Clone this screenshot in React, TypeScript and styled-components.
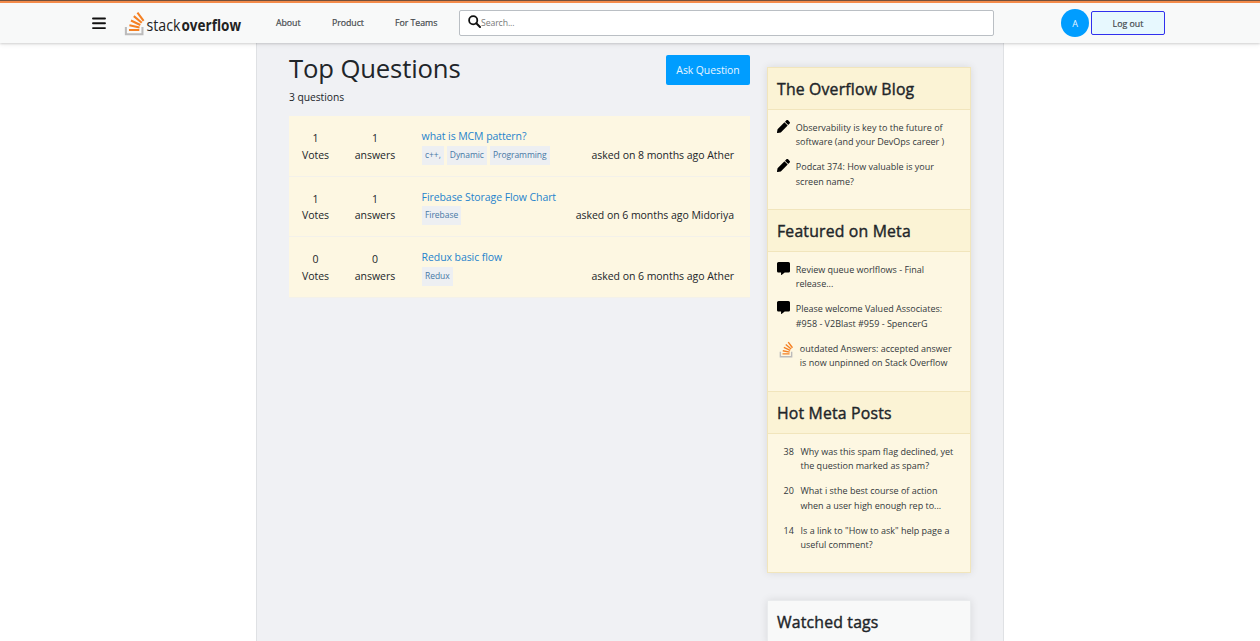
import React from 'react';
import styled, { createGlobalStyle } from 'styled-components';

const GlobalStyle = createGlobalStyle`
  * { box-sizing: border-box; }
  html, body { margin: 0; padding: 0; height: 641px; overflow: hidden; background: #fff; }
  body { font-family: "Open Sans", "Noto Sans", sans-serif; color: #212529; }
  h1, h2, p { margin: 0; font-weight: 400; }
`;

const Page = styled.div`
  height: 641px;
  display: flex;
  flex-direction: column;
  overflow: hidden;
`;

const Header = styled.header`
  position: relative;
  z-index: 1;
  flex: none;
  height: 43px;
  background: #f8f9f9;
  border-top: 3px solid #f48b4a;
  box-shadow: 0 1px 2px rgba(0, 0, 0, 0.14), 0 2px 5px rgba(0, 0, 0, 0.06);
  display: flex;
  align-items: flex-start;
  &::before {
    content: '';
    position: absolute;
    left: 0;
    right: 0;
    top: -3px;
    height: 1px;
    background: #74503c;
  }
`;

const MenuIcon = styled.svg`
  margin: 14px 0 0 92px;
  width: 14px;
  height: 13px;
`;

const Logo = styled.svg`
  margin: 7px 0 0 18px;
  width: 120px;
  height: 28px;
  overflow: visible;
`;

const Nav = styled.nav`
  margin-left: 32px;
  display: flex;
`;

const NavLink = styled.a<{ $width: number }>`
  width: ${(p) => p.$width}px;
  line-height: 41px;
  font-size: 8.8px;
  letter-spacing: -0.05px;
  -webkit-text-stroke: 0.2px currentColor;
  color: #45494d;
  white-space: nowrap;
`;

const SearchBox = styled.div`
  width: 535px;
  height: 26px;
  margin-top: 7px;
  padding-left: 8px;
  border: 1px solid #babfc4;
  border-radius: 2px;
  background: #fff;
  display: flex;
  align-items: center;
  font-size: 8.7px;
  letter-spacing: -0.1px;
  color: #777;
`;

const SearchGlyph = styled.svg`
  width: 13px;
  height: 13px;
  margin-top: -3px;
`;

const Avatar = styled.div`
  margin: 6px 0 0 67px;
  width: 28px;
  height: 28px;
  border-radius: 50%;
  background: #009dff;
  color: #e8f5ff;
  font-size: 9px;
  line-height: 29px;
  text-align: center;
`;

const LogoutButton = styled.button`
  margin: 8px 0 0 2px;
  padding: 1px 0 0;
  width: 74px;
  height: 24px;
  border: 1px solid #3030ee;
  border-radius: 2px;
  background: #e7f8fe;
  color: #45494d;
  font: 400 8.8px "Open Sans", sans-serif;
  -webkit-text-stroke: 0.2px currentColor;
`;

const Content = styled.main`
  align-self: flex-start;
  margin-left: 256px;
  width: 748px;
  flex: 1;
  min-height: 0;
  background: #f0f1f4;
  box-shadow: inset 1px 0 #dfe1e4, inset -1px 0 #dfe1e4;
  display: flex;
  overflow: hidden;
`;

const Questions = styled.section`
  margin: 12px 0 0 33px;
  width: 461px;
`;

const TopBar = styled.div`
  display: flex;
  justify-content: space-between;
  height: 30px;
`;

const Title = styled.h1`
  font-size: 25.7px;
  line-height: 27px;
  letter-spacing: -0.15px;
  white-space: nowrap;
`;

const AskButton = styled.button`
  width: 84px;
  height: 30px;
  padding: 0;
  border: 0;
  border-radius: 2px;
  background: #009dff;
  color: #e8f5ff;
  font: 400 10.4px "Open Sans", sans-serif;
  letter-spacing: -0.05px;
`;

const Count = styled.p`
  margin-top: 4px;
  height: 27px;
  line-height: 17px;
  font-size: 10.3px;
  letter-spacing: -0.05px;
`;

const Row = styled.article`
  height: 60.5px;
  display: flex;
  background: #fdf7e2;
  border-bottom: 1px solid #f3f1ea;
  font-size: 10.5px;
  letter-spacing: -0.04px;
  line-height: 16.5px;
`;

const Stat = styled.div<{ $width: number }>`
  width: ${(p) => p.$width}px;
  padding-top: 14px;
  text-align: center;
`;

const Detail = styled.div`
  flex: 1;
  margin-left: 13.6px;
  padding: 11px 16px 0 0;
`;

const QuestionLink = styled.a`
  display: block;
  height: 18px;
  line-height: 18px;
  font-size: 10.5px;
  letter-spacing: -0.08px;
  color: #1f83cc;
`;

const Meta = styled.div`
  display: flex;
  justify-content: space-between;
  align-items: center;
  height: 20px;
  white-space: nowrap;
`;

const Tags = styled.div`
  display: flex;
  gap: 3px;
  margin-left: 0.4px;
`;

const Tag = styled.span`
  height: 19px;
  padding: 0 3px;
  background: #edeff2;
  color: #4778a5;
  font-size: 8.5px;
  line-height: 18px;
  letter-spacing: -0.05px;
`;

const Aside = styled.aside`
  margin: 24px 0 0 16.5px;
  width: 204px;
  display: flex;
  flex-direction: column;
  gap: 27px;
`;

const Card = styled.div<{ $plain?: boolean }>`
  flex: none;
  border: 1px solid ${(p) => (p.$plain ? '#e9ebed' : '#f1e5bc')};
  background: ${(p) => (p.$plain ? '#f8f9f9' : '#fdf7e2')};
  box-shadow: 0 0 8px rgba(0, 0, 0, 0.1);
`;

const CardTitle = styled.h2<{ $plain?: boolean; $first?: boolean }>`
  height: ${(p) => (p.$first ? 42 : 43)}px;
  padding-left: 9.5px;
  background: ${(p) => (p.$plain ? '#f8f9f9' : '#fbf3d5')};
  border: solid #f1e5bc;
  border-width: ${(p) => (p.$plain ? '0' : p.$first ? '0 0 1px' : '1px 0')};
  font-size: 15.8px;
  letter-spacing: 0.18px;
  -webkit-text-stroke: 0.4px currentColor;
  line-height: 42px;
  white-space: nowrap;
`;

const CardBody = styled.div<{ $height: number }>`
  height: ${(p) => p.$height}px;
  padding: 11px 0 0 9.5px;
  display: flex;
  flex-direction: column;
  gap: 10.7px;
`;

const Item = styled.div`
  display: flex;
  height: 28.7px;
  font-size: 9px;
  line-height: 14.35px;
  white-space: nowrap;
  color: #33373b;
`;

const Marker = styled.span<{ $width: number; $indent?: number }>`
  flex: none;
  width: ${(p) => p.$width}px;
  padding-left: ${(p) => p.$indent ?? 0}px;
`;

const Glyph = styled.svg<{ $size: number; $shift: number }>`
  display: block;
  width: ${(p) => p.$size}px;
  height: ${(p) => p.$size}px;
  margin-top: ${(p) => p.$shift}px;
`;

const Line = styled.span`
  display: block;
`;

const StackMark = () => (
  <>
    <path fill="#bcbbbb" d="M84.4 93.8V70.6h7.7v30.9H22.6V70.6h7.7v23.2z" />
    <path
      fill="#f48024"
      d="M38.8 68.4l37.8 7.9 1.6-7.6-37.8-7.9-1.6 7.6zm5-18l35 16.3 3.2-7-35-16.4-3.2 7.1zm9.7-17.2l29.7 24.7 4.9-5.9-29.7-24.7-4.9 5.9zm19.2-18.3l-6.2 4.6 23 31 6.2-4.6-23-31zM38 86h38.6v-7.7H38V86z"
    />
  </>
);

const Pen = () => (
  <Glyph $size={13} $shift={-1.5} viewBox="0 0 512 512">
    <path d="M498 142l-46.600 46.600c-4.700 4.700-12.300 4.700-17 0L323.500 77.700c-4.700-4.700-4.700-12.300 0-17L370.100 14c18.700-18.700 49.100-18.700 67.900 0l60.100 60.100c18.800 18.700 18.800 49.100-.1 67.900zM284.200 99.800L21.600 362.400.4 483.900c-2.900 16.400 11.400 30.600 27.800 27.800l121.500-21.300 262.600-262.600c4.700-4.700 4.700-12.300 0-17L301.400 99.800c-4.800-4.700-12.400-4.700-17.200 0z" />
  </Glyph>
);

const Comment = () => (
  <Glyph $size={13} $shift={-1.5} viewBox="0 0 512 512">
    <path d="M448 0H64C28.700 0 0 28.700 0 64v288c0 35.300 28.700 64 64 64h96v84c0 9.800 11.200 15.500 19.100 9.700L304 416h144c35.300 0 64-28.700 64-64V64c0-35.300-28.700-64-64-64z" />
  </Glyph>
);

const StackGlyph = () => (
  <Glyph $size={19} $shift={-1.5} viewBox="18 6 84 104">
    <StackMark />
  </Glyph>
);

interface Question {
  votes: number;
  answers: number;
  title: string;
  tags: string[];
  asked: string;
}

const questions: Question[] = [
  { votes: 1, answers: 1, title: 'what is MCM pattern?', tags: ['c++,', 'Dynamic', 'Programming'], asked: 'asked on 8 months ago Ather' },
  { votes: 1, answers: 1, title: 'Firebase Storage Flow Chart', tags: ['Firebase'], asked: 'asked on 6 months ago Midoriya' },
  { votes: 0, answers: 0, title: 'Redux basic flow', tags: ['Redux'], asked: 'asked on 6 months ago Ather' },
];

interface Entry {
  mark: React.ReactNode;
  width: number;
  indent?: number;
  lines: [string, string];
}

const sections: { title: string; height: number; entries: Entry[] }[] = [
  {
    title: 'The Overflow Blog',
    height: 99,
    entries: [
      { mark: <Pen />, width: 18.8, lines: ['Observability is key to the future of', 'software (and your DevOps career )'] },
      { mark: <Pen />, width: 18.8, lines: ['Podcat 374: How valuable is your', 'screen name?'] },
    ],
  },
  {
    title: 'Featured on Meta',
    height: 139,
    entries: [
      { mark: <Comment />, width: 18.8, lines: ['Review queue worlflows - Final', 'release...'] },
      { mark: <Comment />, width: 18.8, lines: ['Please welcome Valued Associates:', '#958 - V2Blast #959 - SpencerG'] },
      { mark: <StackGlyph />, width: 22.8, lines: ['outdated Answers: accepted answer', 'is now unpinned on Stack Overflow'] },
    ],
  },
  {
    title: 'Hot Meta Posts',
    height: 138,
    entries: [
      { mark: '38', width: 23.5, indent: 6.5, lines: ['Why was this spam flag declined, yet', 'the question marked as spam?'] },
      { mark: '20', width: 23.5, indent: 6.5, lines: ['What i sthe best course of action', 'when a user high enough rep to...'] },
      { mark: '14', width: 23.5, indent: 6.5, lines: ['Is a link to "How to ask" help page a', 'useful comment?'] },
    ],
  },
];

export default function App() {
  return (
    <>
      <GlobalStyle />
      <Page>
        <Header>
          <MenuIcon viewBox="0 0 14 13">
            <path d="M1 1.500h12M1 6.300h12M1 11.100h12" stroke="#111" strokeWidth="1.900" strokeLinecap="round" />
          </MenuIcon>
          <Logo viewBox="0 0 120 28">
            <g transform="translate(-5.200 -2) scale(0.268)">
              <StackMark />
            </g>
            <text x="22.500" y="20.500" fontSize="15.500" fill="#222" textLength="34" lengthAdjust="spacingAndGlyphs">stack</text>
            <text x="57.500" y="20.500" fontSize="15.500" fontWeight="700" fill="#222" textLength="59.500" lengthAdjust="spacingAndGlyphs">overflow</text>
          </Logo>
          <Nav>
            <NavLink $width={56}>About</NavLink>
            <NavLink $width={63}>Product</NavLink>
            <NavLink $width={64}>For Teams</NavLink>
          </Nav>
          <SearchBox>
            <SearchGlyph viewBox="0 0 13 13">
              <circle cx="5.200" cy="5.200" r="4.100" fill="none" stroke="#111" strokeWidth="1.800" />
              <path d="M8.300 8.300L12 12" stroke="#111" strokeWidth="2" strokeLinecap="round" />
            </SearchGlyph>
            Search...
          </SearchBox>
          <Avatar>A</Avatar>
          <LogoutButton>Log out</LogoutButton>
        </Header>
        <Content>
          <Questions>
            <TopBar>
              <Title>Top Questions</Title>
              <AskButton>Ask Question</AskButton>
            </TopBar>
            <Count>3 questions</Count>
            {questions.map((q) => (
              <Row key={q.title}>
                <Stat $width={53}>{q.votes}<br />Votes</Stat>
                <Stat $width={66}>{q.answers}<br />answers</Stat>
                <Detail>
                  <QuestionLink>{q.title}</QuestionLink>
                  <Meta>
                    <Tags>{q.tags.map((t) => <Tag key={t}>{t}</Tag>)}</Tags>
                    <span>{q.asked}</span>
                  </Meta>
                </Detail>
              </Row>
            ))}
          </Questions>
          <Aside>
            <Card>
              {sections.map((s, i) => (
                <React.Fragment key={s.title}>
                  <CardTitle $first={i === 0}>{s.title}</CardTitle>
                  <CardBody $height={s.height}>
                    {s.entries.map((e) => (
                      <Item key={e.lines[0]}>
                        <Marker $width={e.width} $indent={e.indent}>{e.mark}</Marker>
                        <div>
                          {e.lines.map((l) => <Line key={l}>{l}</Line>)}
                        </div>
                      </Item>
                    ))}
                  </CardBody>
                </React.Fragment>
              ))}
            </Card>
            <Card $plain>
              <CardTitle $plain $first>Watched tags</CardTitle>
            </Card>
          </Aside>
        </Content>
      </Page>
    </>
  );
}
